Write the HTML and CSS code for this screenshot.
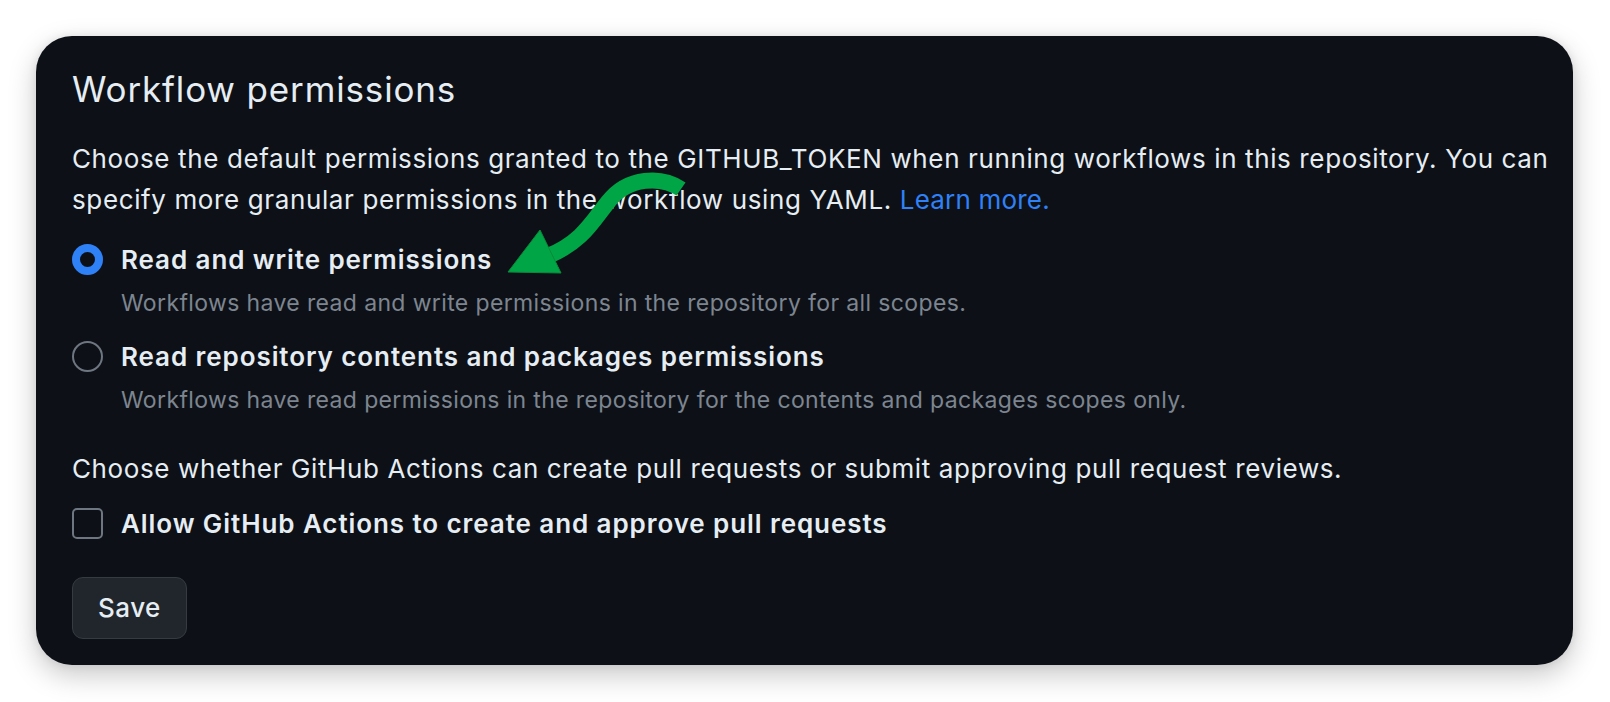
FILE: index.html
```html
<!DOCTYPE html>
<html lang="en">
<head>
<meta charset="utf-8">
<title>Workflow permissions</title>
<link rel="stylesheet" href="styles.css">
</head>
<body>
<div class="page">
  <section class="card">
    <h2 class="title">Workflow permissions</h2>
    <p class="intro">Choose the default permissions granted to the GITHUB_TOKEN when running workflows in this repository. You can specify more granular permissions in the workflow using YAML. <a class="link" href="#">Learn more.</a></p>

    <div class="option first">
      <span class="radio checked"></span>
      <span class="label">Read and write permissions</span>
    </div>
    <div class="note">Workflows have read and write permissions in the repository for all scopes.</div>

    <div class="option second">
      <span class="radio"></span>
      <span class="label">Read repository contents and packages permissions</span>
    </div>
    <div class="note">Workflows have read permissions in the repository for the contents and packages scopes only.</div>

    <p class="question">Choose whether GitHub Actions can create pull requests or submit approving pull request reviews.</p>

    <div class="option check-row">
      <span class="checkbox"></span>
      <span class="label">Allow GitHub Actions to create and approve pull requests</span>
    </div>

    <button class="save" type="button">Save</button>
  </section>

  <svg class="annotation" width="1610" height="702" viewBox="0 0 1610 702" aria-hidden="true">
    <path d="M 681 189 C 662 176, 628 176, 608 202 C 592 222, 582 242, 548 256" fill="none" stroke="#00a645" stroke-width="16"/>
    <polygon points="540,230 508,272 561,273" fill="#00a645" stroke="#0b8a3b" stroke-width="1"/>
  </svg>
</div>
</body>
</html>
```
FILE: styles.css
```css
* { box-sizing: border-box; }

html, body {
  margin: 0;
  padding: 0;
  background: #ffffff;
}

.page {
  position: relative;
  width: 1610px;
  height: 702px;
  padding: 36px 37px 0 36px;
  font-family: Inter, "Noto Sans", "Liberation Sans", sans-serif;
}

.card {
  background: #0d1117;
  border-radius: 36px;
  padding: 31px 20px 26px 36px;
  color: #e6edf3;
  box-shadow: 0 10px 28px rgba(0, 0, 0, 0.22), 0 0 10px rgba(0, 0, 0, 0.08);
}

.title {
  margin: 0;
  font-size: 35px;
  line-height: 44px;
  font-weight: 400;
  letter-spacing: 0.85px;
  color: #e6edf3;
}

.intro {
  margin: 27px 0 0 0;
  font-size: 26px;
  line-height: 41px;
  letter-spacing: 0.62px;
  color: #e6edf3;
}

.link {
  color: #2f81f7;
  text-decoration: none;
  letter-spacing: 0.2px;
}

.option {
  display: flex;
  align-items: center;
  gap: 18px;
  height: 41px;
}

.option.first { margin-top: 19px; }
.option.second { margin-top: 15px; }
.option.check-row { margin-top: 14px; }

.label {
  font-size: 26px;
  line-height: 41px;
  font-weight: 600;
  letter-spacing: 0.92px;
  color: #e6edf3;
}

.radio {
  flex: none;
  width: 31px;
  height: 31px;
  border-radius: 50%;
  border: 2px solid #6e7681;
}

.radio.checked {
  border: 8px solid #2f81f7;
  background: #0d1117;
}

.checkbox {
  flex: none;
  width: 31px;
  height: 31px;
  border-radius: 5px;
  border: 2px solid #6e7681;
}

.note {
  margin: 5px 0 0 49px;
  font-size: 23px;
  line-height: 36px;
  letter-spacing: 0.37px;
  color: #7d8590;
}

.question {
  margin: 30px 0 0 0;
  font-size: 26px;
  line-height: 41px;
  letter-spacing: 0.62px;
  color: #e6edf3;
}

.save {
  display: block;
  margin-top: 33px;
  height: 62px;
  padding: 0 25px;
  border: 1px solid #363b42;
  border-radius: 11px;
  background: #21262d;
  color: #e6edf3;
  font-family: inherit;
  font-size: 26px;
  line-height: 60px;
  font-weight: 500;
  letter-spacing: 0.5px;
}

.annotation {
  position: absolute;
  left: 0;
  top: 0;
  pointer-events: none;
}
```
